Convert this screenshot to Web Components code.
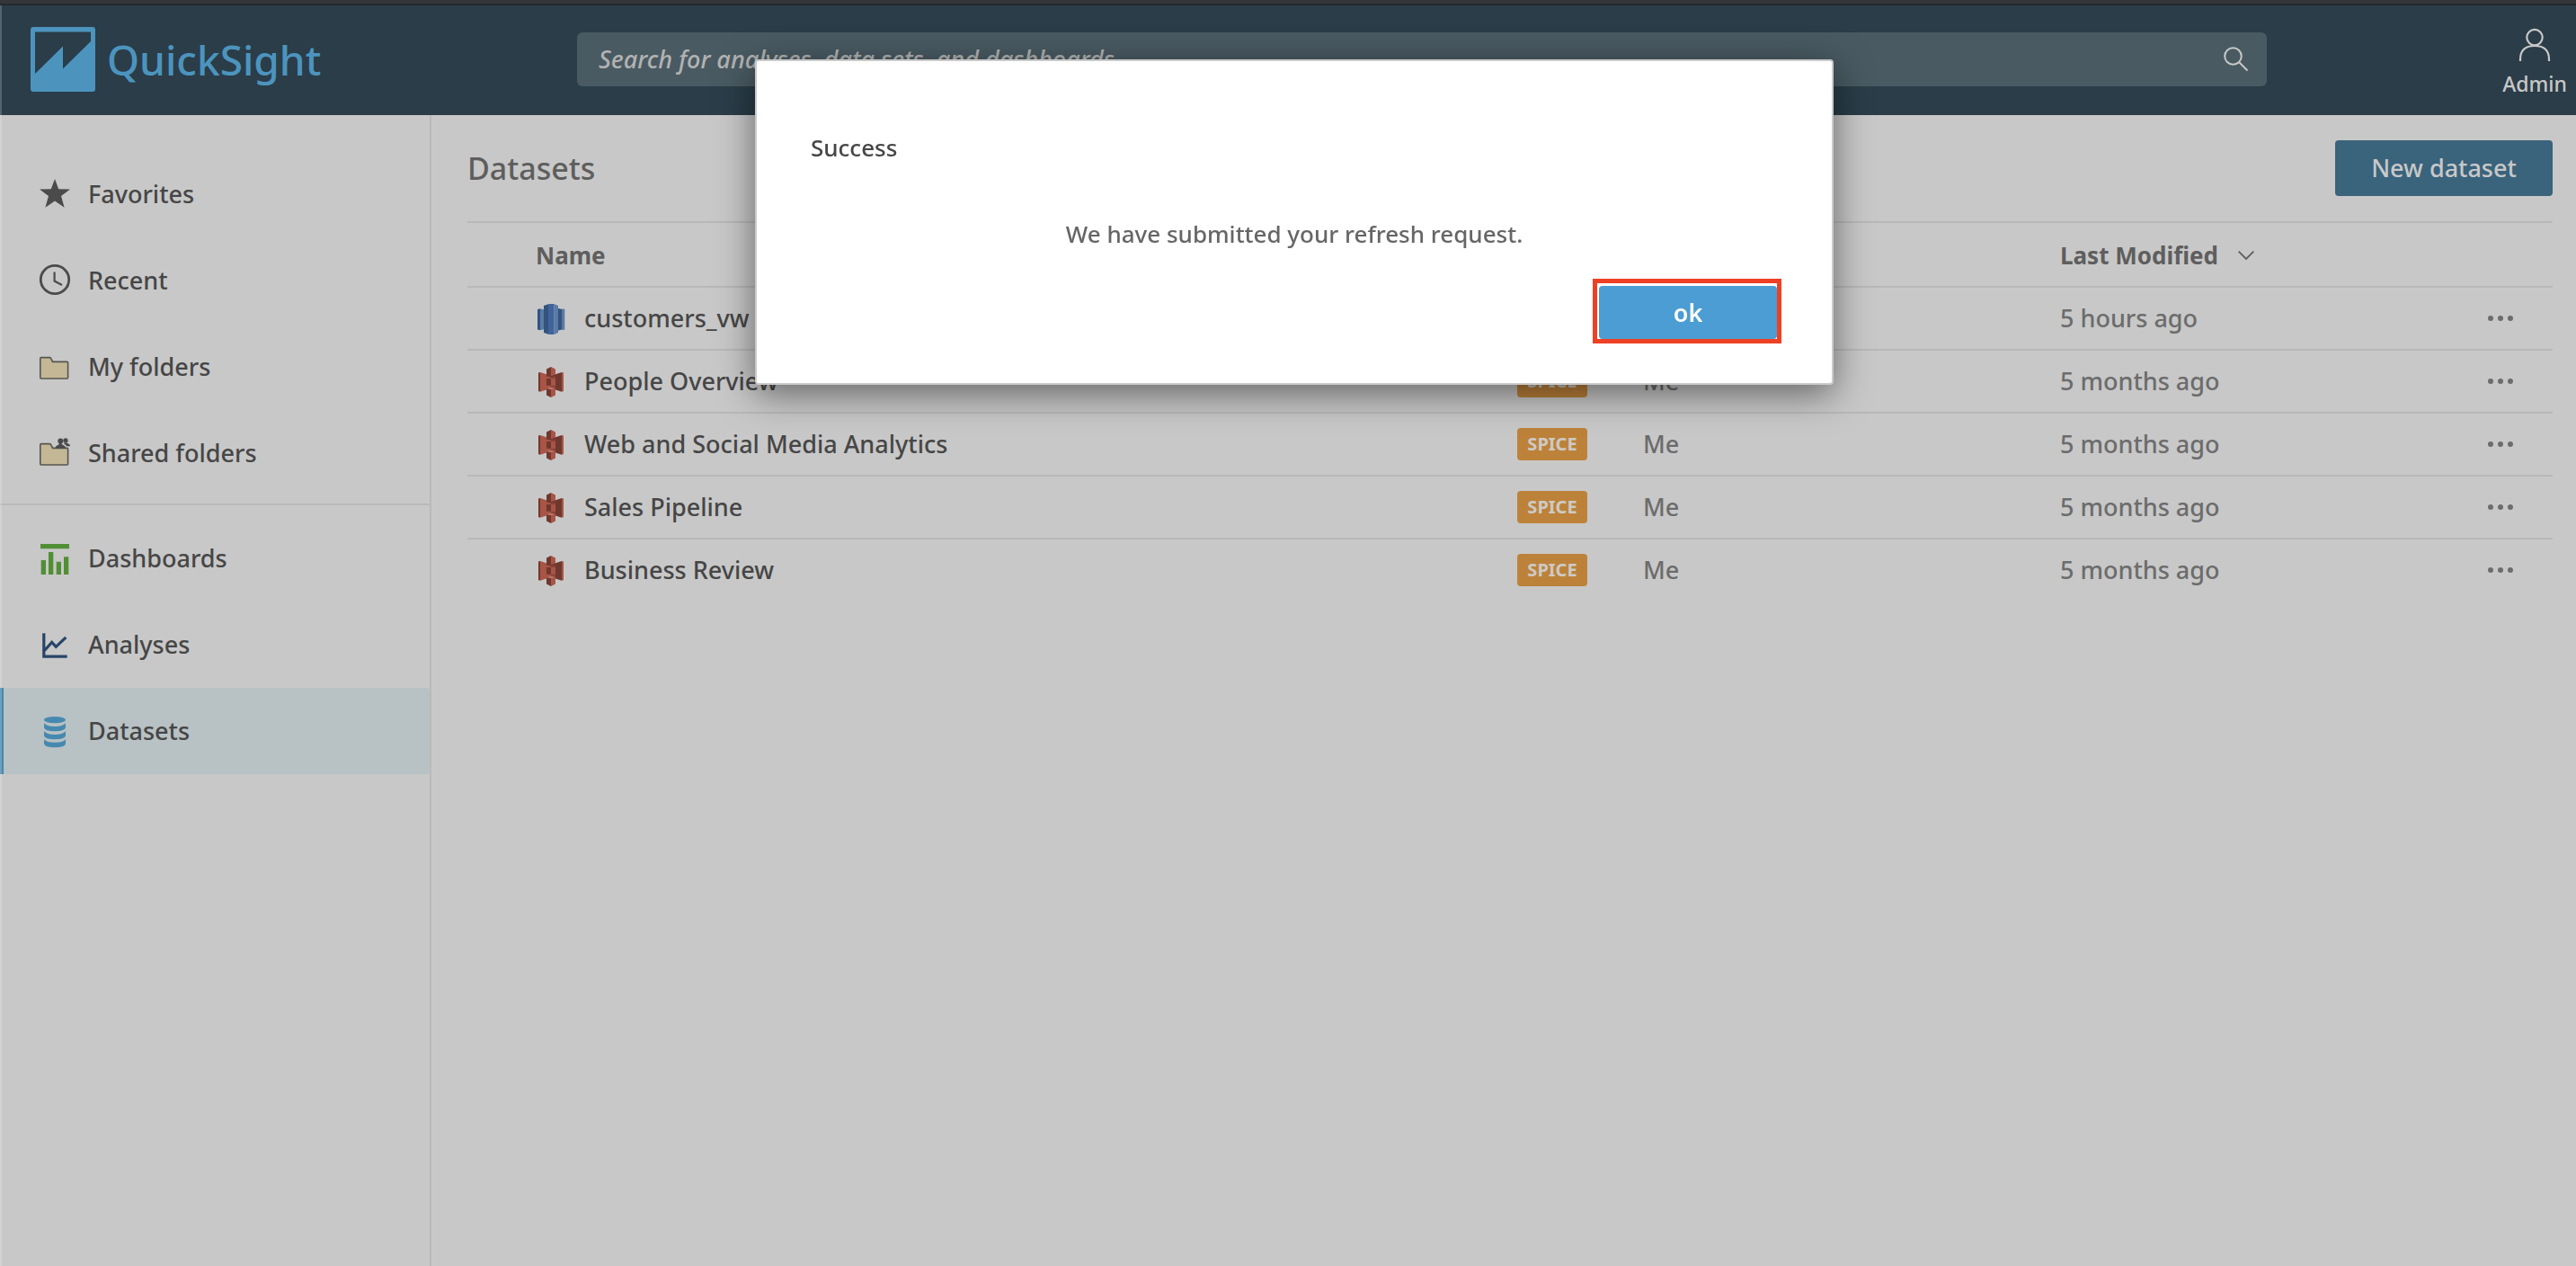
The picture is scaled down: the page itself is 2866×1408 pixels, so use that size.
<!DOCTYPE html>
<html lang="en">
<head>
<meta charset="utf-8">
<title>QuickSight - Datasets</title>
<meta name="viewport" content="width=device-width, initial-scale=1">
<style>
  html, body { margin: 0; min-height: 100%; }
  body {
    background: #c8c8c8;
    color: #464646;
    font: 500 27px/40px "Noto Sans", "Open Sans", sans-serif;
  }
</style>
</head>
<body>
<qs-app></qs-app>

<script>
const define = (name, html, setup) => {
  const template = document.createElement('template');
  template.innerHTML = html;
  customElements.define(name, class extends HTMLElement {
    constructor() {
      super();
      this.attachShadow({ mode: 'open' }).append(template.content.cloneNode(true));
    }
    connectedCallback() { if (setup) setup(this, this.shadowRoot); }
  });
};

const band = y => `<path d="M6 ${y}Q9 ${y + 3.6} 18 ${y + 3.6}T30 ${y}V${y + 5}Q29 ${y + 9} 18 ${y + 9}T6 ${y + 5}Z"/>`;
const folder = '<path d="M1.8 8.6Q1.8 7.6 2.8 7.6H12.3Q13 7.6 13.4 8.2L15.6 12.4H31.6Q32.6 12.4 32.6 13.4V30Q32.6 31 31.6 31H2.8Q1.8 31 1.8 30Z" fill="#c4b795" stroke="#555550" stroke-width="1.6"/>';

const icons = {
  logo: ['0 0 72 72', '<path fill="#4c94be" fill-rule="evenodd" d="M3 0H69Q72 0 72 3V69Q72 72 69 72H3Q0 72 0 69V3Q0 0 3 0ZM5 5.500V52L36 21.500V46.500L67 16V5.500Z"/>'],
  star: ['0 0 36 36', '<path fill="#4b4b4b" d="M18 1L22.200 12.300L35 12.600L25 20L28.600 32.700L18 25.500L7.400 32.700L11 20L1 12.600L13.800 12.300Z"/>'],
  clock: ['0 0 36 36', '<g fill="none" stroke="#4b4b4b"><circle cx="18" cy="17" r="15.700" stroke-width="2.800"/><path d="M17.600 8.500V18.500L26 23" stroke-width="2.200"/></g>'],
  folder: ['0 0 36 36', folder],
  shared: ['0 0 36 36', folder + '<g fill="#4b4b4b"><circle cx="24.300" cy="4.600" r="3"/><path d="M22.800 6H25.800V8L29.300 10.200Q30 11 30 12.800H18.600Q18.600 11 19.400 10.200L22.800 8Z"/><circle cx="30" cy="3.900" r="2.600"/><path d="M28.400 6.400H31.200L34.400 8.200Q35 9 35 10.200H31.200Q30.500 8.900 28.400 7.800Z"/></g>'],
  dashboards: ['0 0 36 36', '<path fill="#518f35" d="M2 2H34V7.300H2ZM2.700 20H8V36H2.700ZM11 11H16.300V36H11ZM19.700 21.700H25V36H19.700ZM28 16.300H33.300V36H28Z"/>'],
  analyses: ['0 0 36 36', '<path fill="none" stroke="#274568" stroke-width="3.200" d="M5.800 5.300V31.200H31.700M6.500 24.500L14.700 15.300L19.300 20.300L30.300 9.800"/>'],
  datasets: ['0 0 36 36', `<g fill="#4689b0"><ellipse cx="18" cy="5.600" rx="12" ry="3.600"/>${band(9.3)}${band(18.3)}${band(27.2)}</g>`],
  redshift: ['0 0 36 36', '<path fill="#34547e" d="M3 8L6 7.300V31.300L3 30.600ZM10 4L15 2.300V35.700L10 34ZM26 7L30.700 8V30.600L26 31.600Z"/><path fill="#41639a" d="M15 2.300L17 2H21.300V36H17L15 35.700Z"/><path fill="#587ba6" d="M6 7.300L10 8.300V30.300L6 31.300ZM21.300 2.100L26 4V34L21.300 35.900ZM30.700 7.300L33.300 8V30.600L30.700 31.300Z"/>'],
  s3: ['0 0 36 36', '<path fill="#a85446" d="M6 8L13 10.300L18 11.500V26L13 27.600L6 29.800Z"/><path fill="#8b4438" d="M18 11.500L23 10.300V27.600L18 26Z"/><path fill="#6f382e" d="M4 8.500L6 8V29.800L4 29ZM23 10.300L30 8V29.800L23 27.600ZM13 15H18V22.700H13ZM13 10.500L18 12L23 10.500V12.500L18 13.500L13 12.500ZM13 4.500L18 2V12L13 10.500Z"/><path fill="#a85446" d="M18 15H23V22.700H18ZM18 2L23 4.500V10.500L18 12ZM30 8L32 8.600V29L30 29.800ZM18 27L23 26V33.600L18 36Z"/><path fill="#6f382e" d="M13 26L18 27V36L13 33.600Z"/><path fill="#bc7469" d="M13 26L18 24.800L23 26L18 27.200Z"/>'],
  search: ['0 0 28 28', '<g fill="none" stroke="#c8c8c8" stroke-width="2"><circle cx="10.500" cy="10.500" r="9.300"/><path d="M17.500 17.500L26.500 26.500"/></g>'],
  user: ['0 0 36 36', '<g fill="none" stroke="#c8c8c8" stroke-width="2.200"><circle cx="18" cy="9.600" r="8.700"/><path d="M2 36V34Q2 19 18 19T34 34V36"/></g>'],
  chevron: ['0 0 18 10', '<path fill="none" stroke="#5e5e5e" stroke-width="1.800" d="M.7.7L9 9L17.300.7"/>'],
  more: ['0 0 28 6', '<g fill="#6c6c6c"><circle cx="3" cy="3" r="3"/><circle cx="14" cy="3" r="3"/><circle cx="25" cy="3" r="3"/></g>']
};

define('qs-icon', `
  <style>:host { display: inline-flex; flex: none; } svg { display: block; overflow: visible; }</style>
`, (host, root) => {
  const icon = icons[host.getAttribute('name')];
  if (!icon) return;
  const [box, body] = icon;
  const [, , w, h] = box.split(' ');
  root.querySelector('svg')?.remove();
  root.querySelector('style').insertAdjacentHTML('afterend',
    `<svg viewBox="${box}" width="${w}" height="${h}" aria-hidden="true">${body}</svg>`);
});

define('qs-search', `
  <style>
    :host { display: block; }
    form {
      display: flex; align-items: center; box-sizing: border-box;
      height: 60px; padding: 0 20px 0 24px; border-radius: 6px; background: #495a62;
    }
    input {
      flex: 1; min-width: 0; padding: 0; border: 0; outline: 0; background: none;
      color: #c8c8c8; font: inherit; font-style: italic;
    }
    input::placeholder { color: #b2b2b2; opacity: 1; }
    button { display: flex; padding: 0; border: 0; background: none; }
  </style>
  <form role="search">
    <input type="text" aria-label="Search" placeholder="Search for analyses, data sets, and dashboards">
    <button type="button" aria-label="Search"><qs-icon name="search"></qs-icon></button>
  </form>
`);

define('qs-header', `
  <style>
    :host {
      display: grid; grid-template-columns: 642px 1fr 344px; box-sizing: border-box;
      height: 128px; border-top: 4px solid #343539; background: #2a3d48;
      box-shadow: inset 0 2px #272829;
    }
    .brand {
      display: flex; align-items: center; gap: 13px; align-self: start;
      margin-top: 26px; padding-left: 34px; color: #4c94be; font-size: 46px; line-height: 72px;
      text-decoration: none;
    }
    qs-search { align-self: start; margin-top: 32px; }
    button {
      display: flex; flex-direction: column; align-items: center; gap: 12px;
      justify-self: end; align-self: start; margin: 28px 10px 0 0; padding: 0;
      border: 0; background: none; color: #c8c8c8; font: inherit; font-size: 23px; line-height: 26px;
    }
  </style>
  <a class="brand" href="#home"><qs-icon name="logo"></qs-icon><span>QuickSight</span></a>
  <qs-search></qs-search>
  <button type="button"><qs-icon name="user"></qs-icon><span>Admin</span></button>
`);

define('qs-nav-item', `
  <style>
    :host { display: block; }
    a {
      display: flex; align-items: center; gap: 19px; box-sizing: border-box;
      height: 96px; padding-left: 39px; border-left: 4px solid transparent;
      border-radius: 0 4px 4px 0; color: #464646; text-decoration: none;
    }
    :host([selected]) a { border-left-color: #4a88ae; background: #b8c1c3; }
  </style>
  <a><span><slot></slot></span></a>
`, (host, root) => {
  const name = host.getAttribute('icon');
  const icon = document.createElement('qs-icon');
  icon.setAttribute('name', name);
  const link = root.querySelector('a');
  link.prepend(icon);
  link.href = '#' + name;
  if (host.hasAttribute('selected')) link.setAttribute('aria-current', 'page');
});

define('qs-nav', `
  <style>
    :host { display: block; box-sizing: border-box; width: 480px; padding-top: 40px; border-right: 2px solid #bababa; }
    hr { margin: 8px 0 11px; border: 0; border-top: 2px solid #bababa; }
  </style>
  <nav aria-label="Main">
    <qs-nav-item icon="star">Favorites</qs-nav-item>
    <qs-nav-item icon="clock">Recent</qs-nav-item>
    <qs-nav-item icon="folder">My folders</qs-nav-item>
    <qs-nav-item icon="shared">Shared folders</qs-nav-item>
    <hr>
    <qs-nav-item icon="dashboards">Dashboards</qs-nav-item>
    <qs-nav-item icon="analyses">Analyses</qs-nav-item>
    <qs-nav-item icon="datasets" selected>Datasets</qs-nav-item>
  </nav>
`);

define('qs-badge', `
  <style>
    :host {
      display: block; box-sizing: border-box; width: 78px; height: 36px;
      border-radius: 4px; background: #bd823a; color: #cdcac5;
      font-size: 20px; font-weight: 700; line-height: 36px; text-align: center;
    }
  </style>
  <slot></slot>
`);

const rows = [
  ['redshift', 'customers_vw', '', '', '5 hours ago'],
  ['s3', 'People Overview', 'SPICE', 'Me', '5 months ago'],
  ['s3', 'Web and Social Media Analytics', 'SPICE', 'Me', '5 months ago'],
  ['s3', 'Sales Pipeline', 'SPICE', 'Me', '5 months ago'],
  ['s3', 'Business Review', 'SPICE', 'Me', '5 months ago']
];

define('qs-dataset-table', `
  <style>
    :host { display: block; }
    table { width: 100%; border-collapse: separate; border-spacing: 0; table-layout: fixed; }
    th, td { height: 68px; padding: 0; border-top: 2px solid #b8b8b8; text-align: left; vertical-align: middle; }
    th { height: 68px; padding-top: 2px; color: #5e5e5e; font-size: 26px; font-weight: 700; }
    td { color: #6c6c6c; }
    .type { width: 140px; }
    .owner { width: 464px; }
    .modified { width: 476px; }
    .actions { width: 72px; }
    th.name { padding-left: 76px; }
    .name > div { display: flex; align-items: center; gap: 19px; padding-left: 75px; color: #464646; }
    .modified > button { display: flex; align-items: center; gap: 22px; padding: 0; border: 0; background: none; color: inherit; font: inherit; }
    .menu { display: flex; align-items: center; height: 40px; padding: 0; border: 0; background: none; }
  </style>
  <table>
    <thead><tr>
      <th class="name">Name</th><th class="type"></th><th class="owner"></th>
      <th class="modified"><button type="button">Last Modified<qs-icon name="chevron"></qs-icon></button></th>
      <th class="actions"></th>
    </tr></thead>
    <tbody>
      ${rows.map(([icon, name, type, owner, date]) => `<tr>
        <td class="name"><div><qs-icon name="${icon}"></qs-icon><span>${name}</span></div></td>
        <td>${type && `<qs-badge>${type}</qs-badge>`}</td>
        <td>${owner}</td><td>${date}</td>
        <td><button class="menu" type="button" aria-label="Actions"><qs-icon name="more"></qs-icon></button></td>
      </tr>`).join('')}
    </tbody>
  </table>
`);

define('qs-content', `
  <style>
    :host { display: block; padding: 28px 26px 0 40px; }
    header { display: flex; align-items: center; justify-content: space-between; height: 62px; margin-bottom: 28px; }
    h1 { margin: 0; color: #5e5e5e; font-size: 34px; font-weight: 500; line-height: 48px; }
    header button {
      width: 242px; height: 62px; padding: 0; border: 0; border-radius: 4px;
      background: #3a637c; color: #c8c8c8; font: inherit;
    }
  </style>
  <header><h1>Datasets</h1><button type="button">New dataset</button></header>
  <qs-dataset-table></qs-dataset-table>
`);

define('qs-dialog', `
  <style>
    :host { position: fixed; inset: 0; display: flex; justify-content: center; align-items: flex-start; padding: 66px 0 0 14px; }
    section {
      box-sizing: border-box; width: 1200px; padding: 76px 56px 44px;
      border: 2px solid #cacaca; border-radius: 4px; background: #fff;
      box-shadow: 0 10px 40px rgba(0, 0, 0, .5);
    }
    h2 { margin: 0 4px; color: #464646; font-size: 26px; font-weight: 500; }
    p { margin: 56px 0 30px; color: #666; font-size: 26px; text-align: center; }
    footer { display: flex; justify-content: flex-end; }
    .mark { display: flex; padding: 3px 0 0 2px; border: 5px solid #ee4025; }
    button {
      width: 198px; height: 59px; padding: 0; border: 0; border-radius: 4px;
      background: #4b9dd3; color: #fff; font: inherit; font-weight: 600;
    }
  </style>
  <section role="dialog" aria-modal="true" aria-labelledby="title">
    <h2 id="title"><slot name="title"></slot></h2>
    <p><slot></slot></p>
    <footer><div class="mark"><button type="button">ok</button></div></footer>
  </section>
`);

define('qs-app', `
  <style>
    :host { display: flex; flex-direction: column; min-height: 100vh; }
    main { display: flex; flex: 1; }
    qs-content { flex: 1; min-width: 0; }
    .edge { position: fixed; inset: 6px auto 0 0; width: 2px; background: rgba(255, 255, 255, .2); }
  </style>
  <qs-header></qs-header>
  <main>
    <qs-nav></qs-nav>
    <qs-content></qs-content>
  </main>
  <div class="edge"></div>
  <qs-dialog><span slot="title">Success</span>We have submitted your refresh request.</qs-dialog>
`);
</script>
</body>
</html>
